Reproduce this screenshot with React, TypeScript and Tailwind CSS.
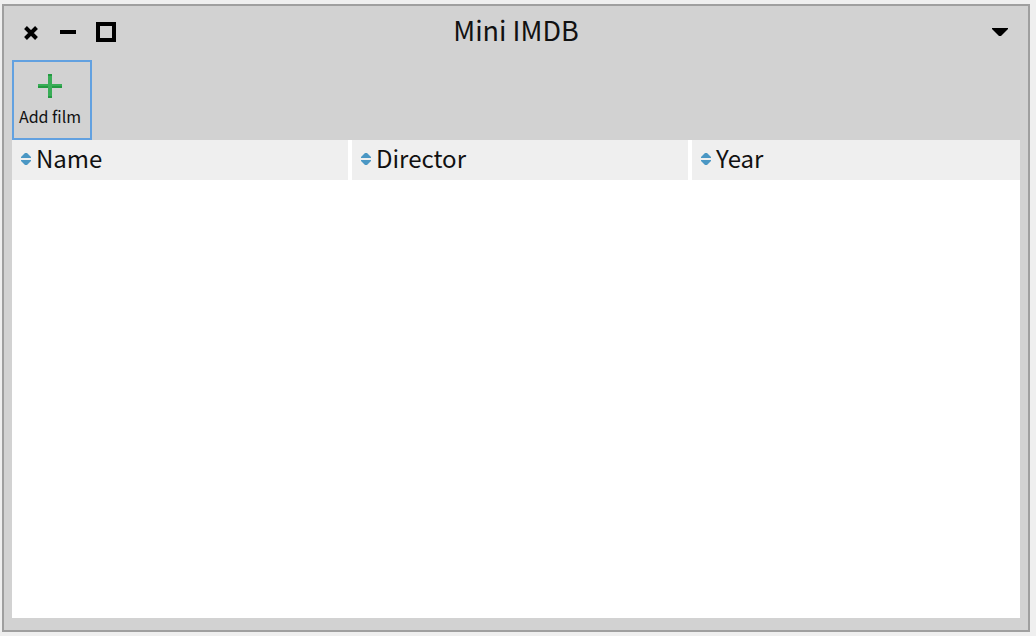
import React from "react";

const columns = ["Name", "Director", "Year"];

function SortIcon() {
  return (
    <svg className="mt-3" width="12" height="14" viewBox="0 0 12 14" aria-hidden="true">
      <path d="M5 1h2l4 4v1H1V5zM1 8h10v1l-4 4H5L1 9z" fill="#4a97c4" />
    </svg>
  );
}

function TitleBar() {
  return (
    <header className="mb-0.5 grid h-[52px] grid-cols-[1fr_auto_1fr] items-center px-2">
      <div className="flex items-center gap-4">
        <button type="button" aria-label="Close" className="pr-px pl-[11px]">
          <svg width="16" height="16" viewBox="0 0 16 16" className="block">
            <path d="M2.5 3.5l11 11M13.5 3.5l-11 11" stroke="#000" strokeWidth="4" />
          </svg>
        </button>
        <button type="button" aria-label="Minimize">
          <svg width="24" height="20" viewBox="0 0 24 20" className="block">
            <path d="M4 8h16v4H4z" />
          </svg>
        </button>
        <button type="button" aria-label="Maximize">
          <svg width="20" height="20" viewBox="0 0 20 20" className="block">
            <path d="M2 2h16v16H2z" fill="none" stroke="#000" strokeWidth="4" />
          </svg>
        </button>
      </div>
      <h1 className="pb-1 text-[27px] leading-8">Mini IMDB</h1>
      <button type="button" aria-label="Window menu" className="justify-self-end pr-2.5">
        <svg width="20" height="12" viewBox="0 0 20 12" className="block">
          <path d="M2 2h16v1l-7 7H9L2 3z" />
        </svg>
      </button>
    </header>
  );
}

export default function App() {
  return (
    <div className="flex min-h-screen bg-[#efefef] py-1 pr-1.5 pl-0.5 text-[#111] font-['Noto_Sans_CJK_SC',sans-serif]">
      <main className="flex flex-1 flex-col border-2 border-[#9f9f9f] bg-[#d2d2d2]">
        <TitleBar />
        <div className="flex px-2">
          <button
            type="button"
            className="flex h-20 w-20 flex-col items-center gap-1 border-2 border-[#62a1e0] pt-3 pr-1"
          >
            <svg width="24" height="24" viewBox="0 0 24 24" aria-hidden="true">
              <path d="M10 0h4v10h10v4H14v10h-4V14H0v-4h10z" fill="#239a41" />
              <path d="M10 2h4v8h10v2H14v10h-4V12H0v-2h10z" fill="#39ad57" />
            </svg>
            <span className="text-[16px] leading-7 whitespace-nowrap">Add film</span>
          </button>
        </div>
        <div className="mx-2 mb-3 flex-1 bg-white">
          <table className="w-full table-fixed border-collapse">
            <colgroup>
              <col className="w-[340px]" />
              <col className="w-[340px]" />
              <col />
            </colgroup>
            <thead>
              <tr>
                {columns.map((name) => (
                  <th key={name} scope="col" className="p-0 pr-1 font-normal last:pr-0">
                    <button
                      type="button"
                      className="flex h-10 w-full items-start gap-1 bg-[#efefef] pl-2 text-[24px] leading-9"
                    >
                      <SortIcon />
                      {name}
                    </button>
                  </th>
                ))}
              </tr>
            </thead>
            <tbody />
          </table>
        </div>
      </main>
    </div>
  );
}
